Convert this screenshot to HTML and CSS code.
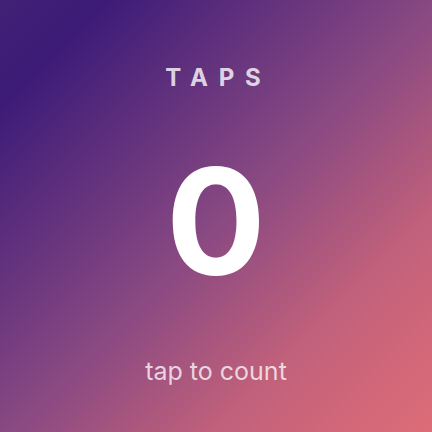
FILE: index.html
```html
<!DOCTYPE html>
<html lang="en">
<head>
    <meta charset="UTF-8">
    <meta name="viewport" content="width=device-width, initial-scale=1.0">
    <title>Taps</title>
    <link rel="stylesheet" href="styles.css">
</head>
<body>
    <!-- 计数面板 -->
    <div class="counter">
        <div class="label">TAPS</div>
        <div class="count">0</div>
        <div class="hint">tap to count</div>
    </div>
</body>
</html>
```

FILE: styles.css
```css
/* 全局 */
body, html {
    margin: 0;
    padding: 0;
    height: 100%;
    font-family: 'Inter', 'Noto Sans', sans-serif;
    overflow: hidden;
}

.counter {
    height: 100%;
    display: flex;
    flex-direction: column;
    align-items: center;
    background: linear-gradient(135deg, #402274 0%, #3c1b78 12%, #874882 50%, #c2617b 75%, #de6c77 100%);
    color: #fff;
}

.label {
    margin-top: 63px;
    padding-left: 5px;
    font-size: 24px;
    font-weight: 700;
    letter-spacing: 0.45em;
    color: rgba(255, 255, 255, 0.8);
}

.count {
    margin-top: 41px;
    font-size: 148px;
    font-weight: 700;
    line-height: 1.2;
}

.hint {
    margin-top: 45px;
    font-size: 25px;
    color: rgba(255, 255, 255, 0.75);
}
```
